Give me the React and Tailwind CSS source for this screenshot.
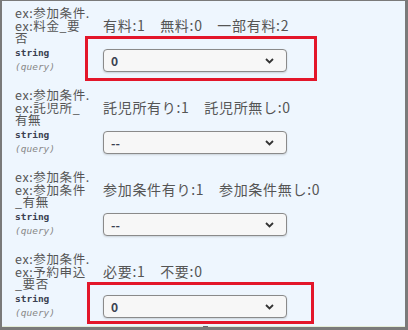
import React from "react";

const params = [
  {
    lines: ["ex:参加条件.", "ex:料金_要", "否"],
    desc: "有料:1　無料:0　一部有料:2",
    value: "0",
    mark: "-top-[13px] -left-[18px] -right-[30px] -bottom-[9px]",
  },
  {
    lines: ["ex:参加条件.", "ex:託児所_", "有無"],
    desc: "託児所有り:1　託児所無し:0",
    value: "--",
  },
  {
    lines: ["ex:参加条件.", "ex:参加条件", "_有無"],
    desc: "参加条件有り:1　参加条件無し:0",
    value: "--",
  },
  {
    lines: ["ex:参加条件.", "ex:予約申込", "_要否"],
    desc: "必要:1　不要:0",
    value: "0",
    mark: "-top-[13px] -left-[16px] -right-[27px] -bottom-[6px]",
  },
];

const Chevron = () => (
  <svg width="9" height="6" viewBox="0 0 9 6" className="shrink-0">
    <path d="M1 1 L4.5 4.5 L8 1" fill="none" stroke="#333" strokeWidth="1.8" />
  </svg>
);

const ParamRow = ({ p }) => {
  return (
    <div className="flex pt-[6px] pb-[9px]">
      <div className="w-[88px] shrink-0">
        <div className="text-[12.5px] leading-[12.5px] tracking-[0.6px] text-[#555] whitespace-nowrap">
          {p.lines.map((l, i) => (
            <React.Fragment key={i}>
              {i > 0 && <br />}
              {l}
            </React.Fragment>
          ))}
        </div>
        <div className="mt-[1.5px] text-[9.5px] leading-[14px] font-bold text-[#3b4151] font-['DejaVu_Sans_Mono',monospace]">
          string
        </div>
        <div className="text-[9.5px] leading-[14px] italic text-[#888] font-['DejaVu_Sans_Mono',monospace]">
          (query)
        </div>
      </div>
      <div className="pt-[12px]">
        <div className="text-[14px] leading-[13px] tracking-[0.7px] text-[#555] whitespace-nowrap">{p.desc}</div>
        <div className="relative mt-[17px] w-[184px]">
          <div className="flex items-center justify-between h-[23px] pl-[7px] pr-[12px] rounded-[4px] border border-[#8a8a8a] bg-[#f7f7f7] shadow-[0_1px_2px_rgba(0,0,0,0.15)]">
            <span className="text-[12px] font-bold text-[#3b4151]">{p.value}</span>
            <Chevron />
          </div>
          {p.mark && (
            <div className={`absolute ${p.mark} border-[3px] border-[#e3162a] pointer-events-none`} />
          )}
        </div>
      </div>
    </div>
  );
};

export default function App() {
  return (
    <div className="relative w-[408px] h-[330px] overflow-hidden bg-[#eef6fe] border-l-2 border-t border-r-[3px] border-b-[3px] border-[#7a7a7a] font-['Noto_Sans_CJK_JP','Noto_Sans',sans-serif]">
      <div className="pl-[13px]">
        {params.map((p, i) => (
          <ParamRow key={i} p={p} />
        ))}
      </div>
      <div className="absolute left-0 right-0 bottom-0 h-px bg-[#e3ecd6]" />
      <div className="absolute left-[201px] bottom-0 w-[5px] h-[1px] bg-[#666]" />
    </div>
  );
}
